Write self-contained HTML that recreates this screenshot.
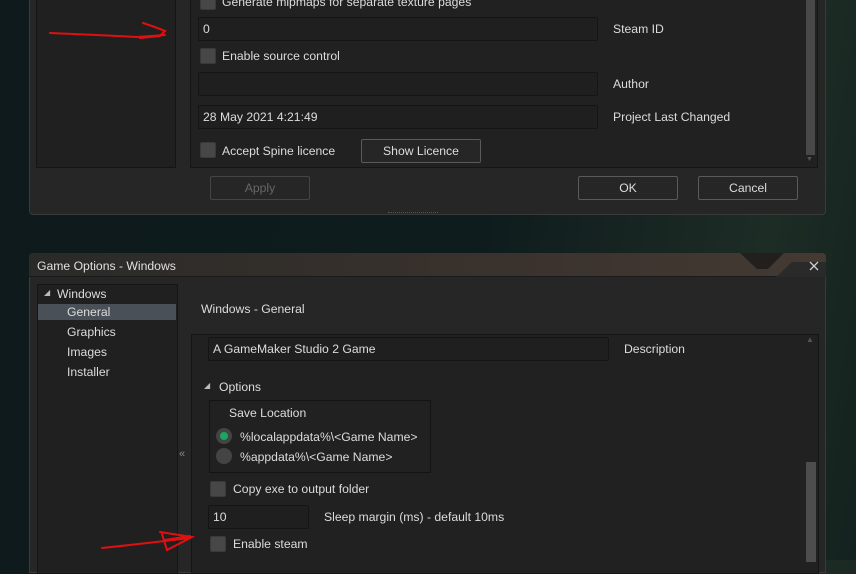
<!DOCTYPE html>
<html><head><style>
*{margin:0;padding:0;box-sizing:border-box}
body{width:856px;height:560px;overflow:hidden;position:relative;font-family:"Liberation Sans","DejaVu Sans",sans-serif;font-size:12.2px;color:#dcdcdc;
background:linear-gradient(100deg,#0e1a1c 0%,#0f1c1d 55%,#1e2c26 85%,#14221f 100%)}
.a{position:absolute}
.inp{position:absolute;background:#1f1f1f;border:1px solid #151515;border-radius:2px;padding-left:4px;line-height:22px;color:#ddd}
.cb{position:absolute;width:16px;height:16px;background:#474747;border-radius:2px;border:1px solid #3a3a3a}
.btn{position:absolute;border:1px solid #5a5a5a;border-radius:2px;background:#262626;text-align:center;line-height:22px;color:#ddd}
.t{position:absolute;white-space:nowrap;margin-top:1px}
</style></head><body>
<div class="a" style="left:29px;top:-10px;width:797px;height:225px;background:#262626;border:1px solid #3a3a3a;border-radius:4px"></div>
<div class="a" style="left:36px;top:-5px;width:140px;height:173px;background:#202020;border:1px solid #151515"></div>
<div class="a" style="left:190px;top:-5px;width:628px;height:173px;background:#212121;border:1px solid #151515"></div>
<div class="a" style="left:806px;top:-5px;width:9px;height:160px;background:#484848"></div>
<div class="t" style="left:806px;top:155px;font-size:7px;color:#555">▼</div>
<div class="cb" style="left:200px;top:-6px"></div>
<div class="t" style="left:222px;top:-6px">Generate mipmaps for separate texture pages</div>
<div class="inp" style="left:198px;top:17px;width:400px;height:24px">0</div>
<div class="t" style="left:613px;top:21px">Steam ID</div>
<div class="cb" style="left:200px;top:48px"></div>
<div class="t" style="left:222px;top:48px">Enable source control</div>
<div class="inp" style="left:198px;top:72px;width:400px;height:24px"></div>
<div class="t" style="left:613px;top:76px">Author</div>
<div class="inp" style="left:198px;top:105px;width:400px;height:24px">28 May 2021 4:21:49</div>
<div class="t" style="left:613px;top:109px">Project Last Changed</div>
<div class="cb" style="left:200px;top:142px"></div>
<div class="t" style="left:222px;top:143px">Accept Spine licence</div>
<div class="btn" style="left:361px;top:139px;width:120px;height:24px">Show Licence</div>
<div class="btn" style="left:210px;top:176px;width:100px;height:24px;color:#666;border-color:#444">Apply</div>
<div class="btn" style="left:578px;top:176px;width:100px;height:24px">OK</div>
<div class="btn" style="left:698px;top:176px;width:100px;height:24px">Cancel</div>
<div class="a" style="left:388px;top:212px;width:50px;height:2px;border-top:1px dotted #555"></div>
<div class="a" style="left:29px;top:253px;width:797px;height:320px;background:#262626;border:1px solid #3a3a3a;border-radius:4px 4px 0 0"></div>
<div class="a" style="left:29px;top:253px;width:797px;height:24px;background:linear-gradient(90deg,#2a2a28,#3a322d 60%,#443a33);border-radius:4px 4px 0 0;border-bottom:1px solid #1a1a1a"></div>
<div class="t" style="left:37px;top:258px;color:#e0e0e0">Game Options - Windows</div>
<svg class="a" style="left:740px;top:253px" width="86" height="24"><path d="M0 0 L17 16 L28 16 L44 0 Z" fill="#231f1c"/><path d="M52 9 L86 9 L86 24 L36 24 Z" fill="#2a2a2a"/><path d="M70 9 L78 17 M78 9 L70 17" stroke="#cfcfcf" stroke-width="1.3"/></svg>
<div class="a" style="left:37px;top:284px;width:141px;height:290px;background:#202020;border:1px solid #151515"></div>
<div class="a" style="left:38px;top:304px;width:138px;height:16px;background:#4a5058"></div>
<div class="t" style="left:44px;top:287px;font-size:8px;color:#bbb">◢</div>
<div class="t" style="left:57px;top:286px">Windows</div>
<div class="t" style="left:67px;top:304px">General</div>
<div class="t" style="left:67px;top:324px">Graphics</div>
<div class="t" style="left:67px;top:344px">Images</div>
<div class="t" style="left:67px;top:364px">Installer</div>
<div class="t" style="left:179px;top:447px;color:#888;font-size:11px">«</div>
<div class="t" style="left:201px;top:301px">Windows - General</div>
<div class="a" style="left:191px;top:334px;width:628px;height:240px;background:#212121;border:1px solid #151515"></div>
<div class="a" style="left:806px;top:462px;width:10px;height:100px;background:#4d4d4d"></div>
<div class="t" style="left:806px;top:334px;font-size:8px;color:#555">▲</div>
<div class="inp" style="left:208px;top:337px;width:401px;height:24px">A GameMaker Studio 2 Game</div>
<div class="t" style="left:624px;top:341px">Description</div>
<div class="t" style="left:204px;top:380px;font-size:8px;color:#bbb">◢</div>
<div class="t" style="left:219px;top:379px">Options</div>
<div class="a" style="left:209px;top:400px;width:222px;height:73px;border:1px solid #141414"></div>
<div class="t" style="left:229px;top:405px">Save Location</div>
<div class="a" style="left:216px;top:428px;width:16px;height:16px;border-radius:50%;background:#444"></div>
<div class="a" style="left:220px;top:432px;width:8px;height:8px;border-radius:50%;background:#1aa860"></div>
<div class="t" style="left:240px;top:429px">%localappdata%\&lt;Game Name&gt;</div>
<div class="a" style="left:216px;top:448px;width:16px;height:16px;border-radius:50%;background:#444"></div>
<div class="t" style="left:240px;top:449px">%appdata%\&lt;Game Name&gt;</div>
<div class="cb" style="left:210px;top:481px"></div>
<div class="t" style="left:233px;top:481px">Copy exe to output folder</div>
<div class="inp" style="left:208px;top:505px;width:101px;height:24px">10</div>
<div class="t" style="left:324px;top:509px">Sleep margin (ms) - default 10ms</div>
<div class="cb" style="left:210px;top:536px"></div>
<div class="t" style="left:233px;top:536px">Enable steam</div>
<svg class="a" style="left:0;top:0" width="856" height="560" fill="none" stroke="#e01010" stroke-width="2" stroke-linecap="round">
<path d="M50 33 Q100 35 137 37 L165 35 M143 23 Q158 28 165 31 L160 36 L140 38"/>
<path d="M102 548 Q140 544 190 538 M160 532 L192 537 L167 550 L162 534 M165 540 L190 536"/>
</svg>
</body></html>
